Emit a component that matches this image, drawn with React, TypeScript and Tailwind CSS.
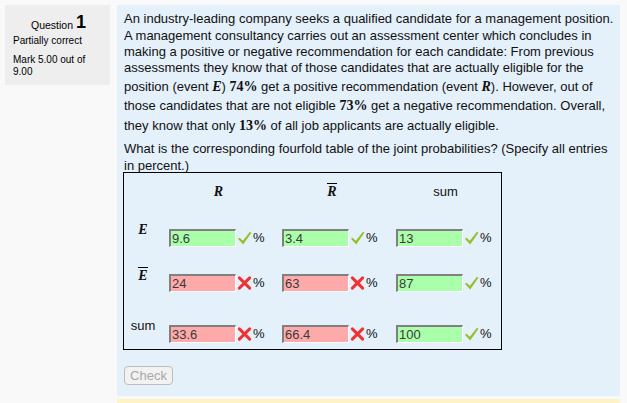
import type { ReactNode } from 'react'

type Cell = { value: string; ok: boolean }

const rows: { label: ReactNode; cells: Cell[]; h: string }[] = [
  {
    label: <M>E</M>,
    cells: [
      { value: '9.6', ok: true },
      { value: '3.4', ok: true },
      { value: '13', ok: true },
    ],
    h: 'h-[45px]',
  },
  {
    label: <Bar>E</Bar>,
    cells: [
      { value: '24', ok: false },
      { value: '63', ok: false },
      { value: '87', ok: true },
    ],
    h: 'h-[51px]',
  },
  {
    label: <span className="font-['Liberation_Sans',Arial,sans-serif] text-[13px]">sum</span>,
    cells: [
      { value: '33.6', ok: false },
      { value: '66.4', ok: false },
      { value: '100', ok: true },
    ],
    h: 'h-[44px]',
  },
]

function M({ children }: { children: ReactNode }) {
  return <span className="font-['Liberation_Serif',serif] font-bold italic text-[14px]">{children}</span>
}

function Bar({ children }: { children: ReactNode }) {
  return (
    <span className="inline-block border-t-[1.5px] border-black pt-[1px] leading-[14px] font-['Liberation_Serif',serif] font-bold italic text-[14px]">
      {children}
    </span>
  )
}

function Num({ children }: { children: ReactNode }) {
  return <span className="font-['Liberation_Serif',serif] font-bold text-[14px]">{children}</span>
}

function Tick() {
  return (
    <svg width="15" height="16" viewBox="0 0 16 16" className="mt-[1px]">
      <path d="M1 8.8 L2.8 7.6 L6.2 10.8 L13.8 1.2 L15.4 2.4 L6.6 15 Z" fill="#94c02a" />
    </svg>
  )
}

function Cross() {
  return (
    <svg width="15" height="16" viewBox="0 0 16 16" className="mt-[1px]">
      <path d="M2.5 2.5 L13.5 13.5 M13.5 2.5 L2.5 13.5" stroke="#f23232" strokeWidth="3.2" strokeLinecap="round" />
    </svg>
  )
}

function Answer({ value, ok }: Cell) {
  return (
    <div className="flex items-start pl-[7px]">
      <div
        className={`w-[67px] h-[18px] border-t-2 border-l-2 border-b border-r border-t-[#808080] border-l-[#808080] border-b-white border-r-white pl-[1px] text-[13px] leading-[15px] text-[#3a3a3a] ${
          ok ? 'bg-[#aaffaa]' : 'bg-[#ffaaaa]'
        }`}
      >
        {value}
      </div>
      <div className="ml-[1px]">{ok ? <Tick /> : <Cross />}</div>
      <span className="ml-[1px] text-[13px] leading-[18px]">%</span>
    </div>
  )
}

export default function App() {
  return (
    <div className="min-h-[403px] bg-[#f9f9f9] flex gap-[7px] pl-[5px] pt-[5px] font-['Liberation_Sans',Arial,sans-serif] text-[#111]">
      {/* info */}
      <div className="w-[105px] h-[80px] bg-[#eeeeee] pl-[8px] pt-[6px] text-[10px] text-black">
        <div className="pl-[18px] h-[20px] flex items-end leading-none">
          <span className="text-[10.5px] mb-[1px]">Question</span>
          <span className="ml-[3px] text-[18px] font-bold">1</span>
        </div>
        <div className="mt-[4px] leading-[12px]">Partially correct</div>
        <div className="mt-[7px] leading-[12px]">
          Mark 5.00 out of
          <br />
          9.00
        </div>
      </div>

      {/* content */}
      <div className="w-[503px]">
        <div className="h-[391px] bg-[#e4f0fa] pl-[6px] pt-[6px] text-[13px] whitespace-nowrap">
          <div className="pl-[1px]">
            <div className="h-[17px] leading-[16px]">An industry-leading company seeks a qualified candidate for a management position.</div>
            <div className="h-[16px] leading-[16px]">A management consultancy carries out an assessment center which concludes in</div>
            <div className="h-[16px] leading-[16px]">making a positive or negative recommendation for each candidate: From previous</div>
            <div className="h-[19px] leading-[16px]">assessments they know that of those candidates that are actually eligible for the</div>
            <div className="h-[19px] leading-[16px]">
              position (event <M>E</M>) <Num>74%</Num> get a positive recommendation (event <M>R</M>). However, out of
            </div>
            <div className="h-[20px] leading-[16px]">
              those candidates that are not eligible <Num>73%</Num> get a negative recommendation. Overall,
            </div>
            <div className="h-[20px] leading-[16px]">
              they know that only <Num>13%</Num> of all job applicants are actually eligible.
            </div>
            <div className="mt-[3px] h-[17px] leading-[16px]">
              What is the corresponding fourfold table of the joint probabilities? (Specify all entries
            </div>
            <div className="h-[14px] leading-[16px]">in percent.)</div>
          </div>

          {/* fourfold table */}
          <div className="w-[379px] border border-black">
            <div className="grid grid-cols-[38px_113px_114px_113px] h-[36px] items-center text-center">
              <div />
              <div className="pt-[1px]"><M>R</M></div>
              <div className="pt-[1px]"><Bar>R</Bar></div>
              <div className="pt-[1px]">sum</div>
            </div>
            {rows.map((r, i) => (
              <div key={i} className={`grid grid-cols-[38px_113px_114px_113px] ${r.h}`}>
                <div className="pt-[13px] text-center leading-[16px]">{r.label}</div>
                {r.cells.map((c, j) => (
                  <div key={j} className="pt-[20px]">
                    <Answer {...c} />
                  </div>
                ))}
              </div>
            ))}
          </div>

          <button
            disabled
            className="mt-[16px] ml-[1px] w-[49px] h-[19px] rounded-[4px] border border-[#bdbdbd] bg-[#f2f2f2] text-[13px] leading-[17px] text-[#a8a8a8]"
          >
            Check
          </button>
        </div>
        <div className="mt-[3px] h-[4px] bg-[#fdf3c4]" />
      </div>
    </div>
  )
}
